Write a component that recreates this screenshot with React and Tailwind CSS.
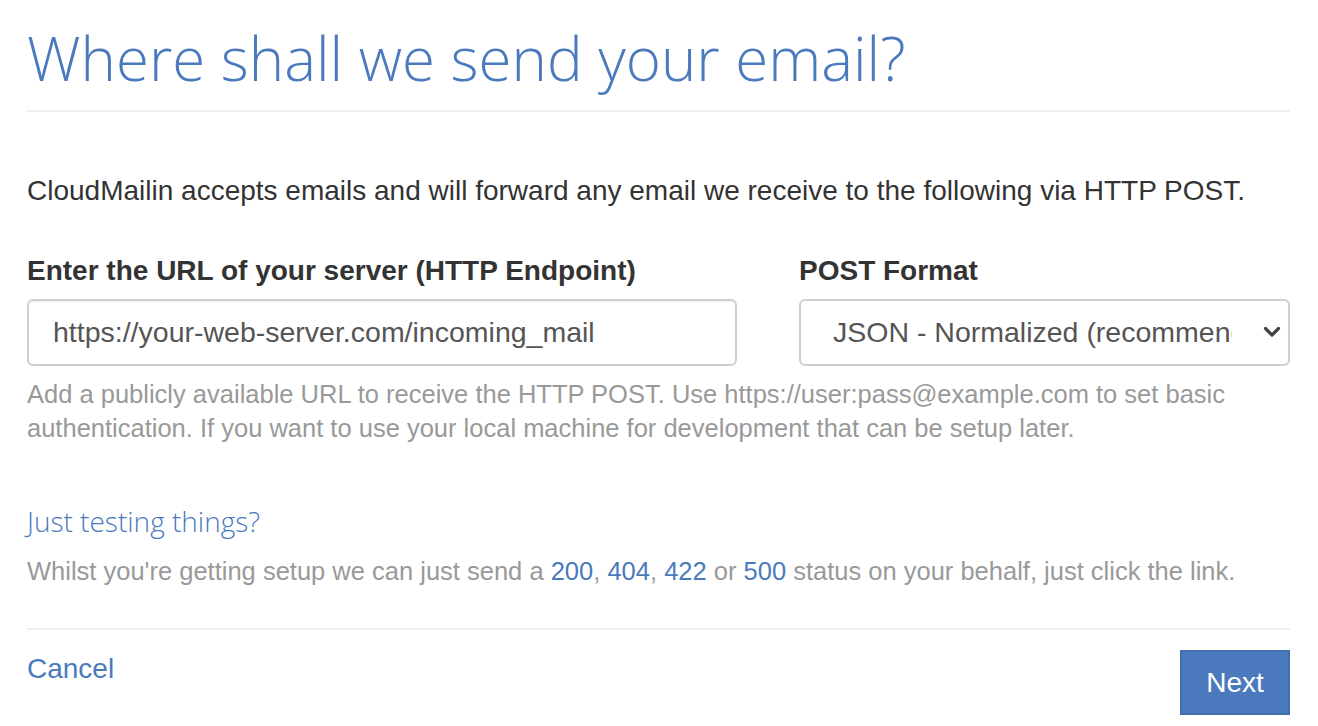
export default function App() {
  return (
    <div className="w-[1318px] h-[726px] bg-white pl-[27px] pr-[28px] font-['Liberation_Sans',Arial,sans-serif] text-[28px] text-[#333] overflow-hidden">
      <h1 className="pt-[20px] pb-[14px] font-['Open_Sans',sans-serif] font-light text-[60px] leading-[76px] text-[#4a7abd] border-b-2 border-[#eeeeee]">
        Where shall we send your email?
      </h1>

      <p className="mt-[62px] leading-[34px]">
        CloudMailin accepts emails and will forward any email we receive to the following via HTTP POST.
      </p>

      <div className="mt-[46px] flex gap-[62px]">
        <div className="w-[710px]">
          <label className="block font-bold leading-[34px] mb-[11px]">Enter the URL of your server (HTTP Endpoint)</label>
          <input
            type="text"
            defaultValue="https://your-web-server.com/incoming_mail"
            className="w-full h-[67px] px-[24px] rounded-[6px] border-2 border-[#cfcfcf] text-[#555] text-[28.5px] outline-none shadow-[inset_0_1px_1px_rgba(0,0,0,0.075)]"
          />
        </div>
        <div className="flex-1">
          <label className="block font-bold leading-[34px] mb-[11px]">POST Format</label>
          <div className="relative">
            <select
              defaultValue="json"
              className="w-full h-[67px] pl-[32px] pr-[56px] rounded-[6px] border-2 border-[#cfcfcf] bg-white text-[#555] text-[28.5px] appearance-none outline-none"
            >
              <option value="json">JSON - Normalized (recommended)</option>
              <option value="multipart">Multipart - Normalized</option>
            </select>
            <svg className="absolute right-[9px] top-[26px] w-[18px] h-[14px] pointer-events-none" viewBox="0 0 18 14" fill="none">
              <path d="M2.5 3.5 L9 10 L15.5 3.5" stroke="#444" strokeWidth="3.2" strokeLinecap="round" strokeLinejoin="round" />
            </svg>
          </div>
        </div>
      </div>

      <p className="mt-[11px] leading-[34px] text-[25.5px] text-[#999]">
        Add a publicly available URL to receive the HTTP POST. Use https://user:pass@example.com to set basic authentication. If you want to use your local machine for development that can be setup later.
      </p>

      <h3 className="mt-[58px] font-['Open_Sans',sans-serif] font-light text-[28px] leading-[36px] text-[#4a7abd]">
        Just testing things?
      </h3>
      <p className="mt-[15px] leading-[34px] text-[25.5px] text-[#999]">
        Whilst you're getting setup we can just send a{' '}
        <a className="text-[#4a7abd]">200</a>,{' '}
        <a className="text-[#4a7abd]">404</a>,{' '}
        <a className="text-[#4a7abd]">422</a> or{' '}
        <a className="text-[#4a7abd]">500</a> status on your behalf, just click the link.
      </p>

      <div className="mt-[40px] border-t-2 border-[#eeeeee] pt-[20px] flex justify-between items-start">
        <a className="text-[#4a7abd] leading-[34px] mt-[2px]">Cancel</a>
        <button className="w-[110px] h-[65px] bg-[#4a7abd] border-2 border-[#426ea9] text-white text-[28px]">
          Next
        </button>
      </div>
    </div>
  )
}
